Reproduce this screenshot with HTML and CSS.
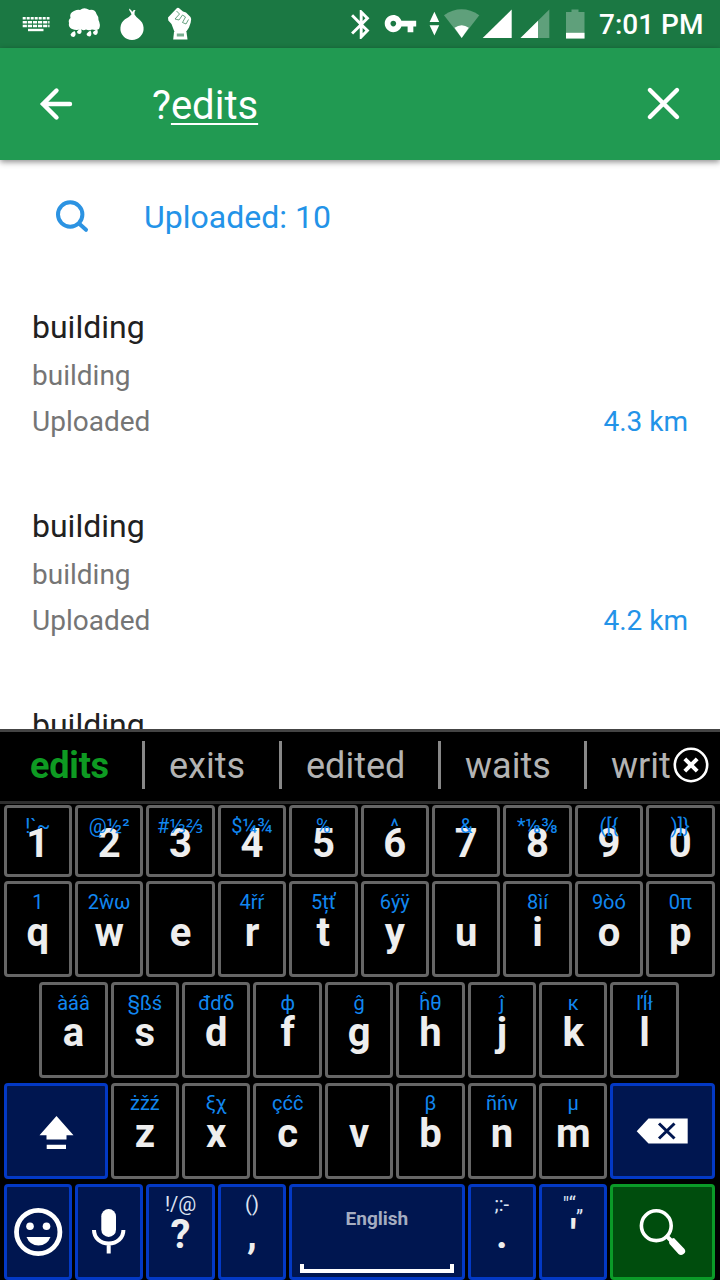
FILE: index.html
```html
<!DOCTYPE html>
<html lang="en">
<head>
<meta charset="utf-8">
<title>Search edits</title>
<link rel="stylesheet" href="styles.css">
</head>
<body>
<div class="screen">
  <div class="status">
    <div class="notices">
      <svg width="36" height="48" viewBox="18 0 36 48" fill="none" stroke="#fff"><path d="M22.700 18.300H49.500" stroke-width="2.600" stroke-dasharray="3 1"/><path d="M22.700 22.200H49.500M22.700 26H49.500" stroke-width="2.400" stroke-dasharray="4.200 .9"/><path d="M28 30H43.500" stroke-width="2.400"/></svg>
      <svg width="36" height="48" viewBox="66 0 36 48" fill="#fff"><path d="M72 29Q68 27 69 23Q68 20 70.500 18Q69 13 74 11Q78 9 80 10Q84 6.500 89.500 10Q95 9 96.500 14Q99 17 98.500 20Q101 25 99 29Q96 30.500 92 29.500Q89 31 86 29.500Q83 31 80.500 29Q77 31 72 29z"/><path d="M74.500 31q2.500 3.500-.5 6-3 0-3.500-2.500 1-2.500 4-3.500zM80.500 28q2.500 4-.5 6-3 0-3-2.500zM90.500 30.500q2 4-.5 6-3 0-3.500-2.500 1.500-2.500 4-3.500zM97 29q2 4-1 6-3 0-3-3z"/></svg>
      <svg width="36" height="48" viewBox="114 0 36 48" fill="#fff"><path d="M131.500 14.500C131 12 129 11 129 8.500Q131.500 9.500 132.300 12Q132.800 9.500 135.500 10Q134 12 134.500 14.500Q136 17 139 19.200A11.600 11.600 0 1 1 125 19.200Q129.500 17 131.500 14.500z"/></svg>
      <svg width="36" height="48" viewBox="162 0 36 48" fill="#fff"><path d="M168 17.500L176.500 8.500Q178 7 180 9L183 11.500L186 12.500L190.500 17Q192 19 190.700 22.500L189 27.500L186 32H174.500L171.500 24L168.300 20.500z"/><path d="M174 32h12.500l1 7.600h-14.300z"/><path d="M176.800 33.500h7.200v3h-7.200z" fill="#79ae90"/><path d="M176.500 11l3 3-4.500 5 4 1 3.500-5 3 2-3 5.500 3.500 1.500 2.500-4.500" fill="none" stroke="#287b4c" stroke-width=".7"/></svg>
    </div>
    <div class="indicators">
      <svg width="36" height="48" viewBox="344 0 36 48" fill="#fff"><path transform="translate(343.800 7) scale(1.450)" d="M17.710 7.710L12 2h-1v7.590L6.410 5 5 6.410 10.590 12 5 17.590 6.410 19 11 14.410V22h1l5.710-5.710-4.300-4.290 4.300-4.290zM13 5.830l1.880 1.880L13 9.590V5.830zm1.880 10.460L13 18.170v-3.760l1.880 1.880z"/></svg>
      <svg width="44" height="48" viewBox="380 0 44 48" fill="#fff"><path transform="translate(383.300 6.400) scale(1.430)" d="M12.650 10C11.830 7.670 9.610 6 7 6c-3.310 0-6 2.690-6 6s2.690 6 6 6c2.610 0 4.830-1.670 5.650-4H17v4h4v-4h2v-4H12.650zM7 14c-1.100 0-2-.9-2-2s.9-2 2-2 2 .9 2 2-.9 2-2 2z"/></svg>
      <svg width="56" height="48" viewBox="424 0 56 48" fill="#fff"><path d="M434.400 11.700l4.800 10.300h-9.600zM434.400 35.500l4.800-10.300h-9.600z"/><path d="M444 15.200Q461.500 3.500 479.300 15.200L461.700 38z" opacity=".3"/><path d="M454.500 27.800Q461.700 22.800 468.800 27.800L461.700 38z"/></svg>
      <svg width="34" height="48" viewBox="480 0 34 48" fill="#fff"><path d="M511.700 9.500V38H482.700z"/></svg>
      <svg width="46" height="48" viewBox="514 0 46 48" fill="#fff"><path d="M549.300 9.500V38H520.500z" opacity=".3"/><path d="M538 20.800V38H520.500z"/></svg>
      <svg width="39" height="48" viewBox="560 0 39 48" fill="#fff"><path d="M566 12h5.500v-2.500h7V12h6v26.500H566z" opacity=".3"/><path d="M566 32.800h18.500v5.700H566z"/></svg>
      <span class="clock">7:01 PM</span>
    </div>
  </div>

  <div class="searchbar">
    <svg width="40" height="40" viewBox="36 84 40 40" class="line"><path d="M56.500 90.500L43 104l13.500 13.500M43 104h27"/></svg>
    <div class="query">?<span class="typed">edits</span></div>
    <svg width="40" height="40" viewBox="643 84 40 40" class="line"><path d="M649.900 90L677 117M677 90L649.900 117"/></svg>
  </div>

  <div class="results">
    <div class="summary">
      <svg width="40" height="40" viewBox="52 196.500 40 40" class="lens"><circle cx="70.200" cy="214" r="12.200"/><path d="M79 223l7 6.300"/></svg>
      <span>Uploaded: 10</span>
    </div>
    <div class="item"><div class="name">building</div><div class="kind">building</div><div class="meta"><span>Uploaded</span><span class="distance">4.3 km</span></div></div>
    <div class="item"><div class="name">building</div><div class="kind">building</div><div class="meta"><span>Uploaded</span><span class="distance">4.2 km</span></div></div>
    <div class="item"><div class="name">building</div></div>
  </div>

  <div class="keyboard">
    <div class="suggestions">
      <span class="word first">edits</span><span class="word w-exits">exits</span><span class="word w-edited">edited</span><span class="word w-waits">waits</span><span class="word w-last">writ</span>
      <svg class="dismiss" width="38" height="38" viewBox="0 0 38 38"><circle cx="19" cy="19" r="16.200" fill="#000" stroke="#fff" stroke-width="2.600"/><path d="M12.800 12.800l12.400 12.400M25.200 12.800L12.800 25.200" stroke="#fff" stroke-width="4"/></svg>
    </div>
    <div class="row digits">
      <div class="key"><b>1</b><i>!`~</i></div><div class="key"><b>2</b><i>@½²</i></div><div class="key"><b>3</b><i>#⅓⅔</i></div><div class="key"><b>4</b><i>$¼¾</i></div><div class="key"><b>5</b><i>%</i></div><div class="key"><b>6</b><i>^</i></div><div class="key"><b>7</b><i>&amp;</i></div><div class="key"><b>8</b><i>*⅛⅜</i></div><div class="key"><b>9</b><i>([{</i></div><div class="key"><b>0</b><i>)]}</i></div>
    </div>
    <div class="row">
      <div class="key"><b>q</b><i>1</i></div><div class="key"><b>w</b><i>2ŵω</i></div><div class="key"><b>e</b></div><div class="key"><b>r</b><i>4řŕ</i></div><div class="key"><b>t</b><i>5țť</i></div><div class="key"><b>y</b><i>6ýÿ</i></div><div class="key"><b>u</b></div><div class="key"><b>i</b><i>8ìí</i></div><div class="key"><b>o</b><i>9òó</i></div><div class="key"><b>p</b><i>0π</i></div>
    </div>
    <div class="row home">
      <div class="key"><b>a</b><i>àáâ</i></div><div class="key"><b>s</b><i>§ßś</i></div><div class="key"><b>d</b><i>đďδ</i></div><div class="key"><b>f</b><i>ф</i></div><div class="key"><b>g</b><i>ĝ</i></div><div class="key"><b>h</b><i>ĥθ</i></div><div class="key"><b>j</b><i>ĵ</i></div><div class="key"><b>k</b><i>к</i></div><div class="key"><b>l</b><i>ľĺł</i></div>
    </div>
    <div class="row">
      <div class="key fn wide"><svg width="40" height="40" viewBox="35 1111 40 40" fill="#fff"><path d="M55.500 1116l17 19.300h-7v4.200h-20v-4.200h-7zM45.700 1144.700h19.300v4.200H45.700z"/></svg></div>
      <div class="key"><b>z</b><i>żžź</i></div><div class="key"><b>x</b><i>ξχ</i></div><div class="key"><b>c</b><i>çćĉ</i></div><div class="key"><b>v</b></div><div class="key"><b>b</b><i>β</i></div><div class="key"><b>n</b><i>ñńν</i></div><div class="key"><b>m</b><i>μ</i></div>
      <div class="key fn wide"><svg width="52" height="30" viewBox="636 1115.500 52 30"><path d="M636.700 1130.700L648.500 1118h39.200v25H648.500z" fill="#fff"/><path d="M659 1123l15.500 15M674.500 1123L659 1138" stroke="#001650" stroke-width="3" fill="none"/></svg></div>
    </div>
    <div class="row">
      <div class="key fn"><svg width="50" height="50" viewBox="12 1206 50 50"><circle cx="37.200" cy="1231" r="21.700" fill="none" stroke="#fff" stroke-width="4.800"/><circle cx="29" cy="1225.300" r="3.800" fill="#fff"/><circle cx="45.500" cy="1225.300" r="3.800" fill="#fff"/><path d="M25.500 1236h24q-3.500 8.600-12 8.600t-12-8.600z" fill="#fff"/></svg></div>
      <div class="key fn"><svg width="36" height="48" viewBox="91 1207 36 48"><rect x="101.300" y="1208" width="14.700" height="28" rx="7.350" fill="#fff"/><path d="M94 1229c0 8 6.500 13.500 14.700 13.500s14.700-5.500 14.700-13.500M108.700 1242v10.500" fill="none" stroke="#fff" stroke-width="4"/></svg></div>
      <div class="key fn"><b>?</b><i>!/@</i></div>
      <div class="key fn"><b>,</b><i>()</i></div>
      <div class="key fn space"><span class="lang">English</span><span class="bracket"></span></div>
      <div class="key fn"><b>.</b><i>;:-</i></div>
      <div class="key fn quote"><b>'</b><i>"“„</i></div>
      <div class="key go wide"><svg width="50" height="50" viewBox="637 1206 50 50"><circle cx="656.300" cy="1224.700" r="14.900" fill="none" stroke="#fff" stroke-width="3.600"/><path d="M666 1234.500l6 6" stroke="#fff" stroke-width="4"/><path d="M669 1241.500q1-4 5-4.500l10.500 11q2 3-1 5-2.500 2-5 0L669.500 1243z" fill="#fff"/></svg></div>
    </div>
  </div>
</div>
</body>
</html>
```
FILE: styles.css
```css
* { box-sizing: border-box; }
body { margin: 0; font-family: Roboto, "Noto Sans", sans-serif; background: #fff; }
svg { display: block; flex: none; }

.screen { width: 720px; height: 1280px; display: flex; flex-direction: column; overflow: hidden; }

.status { flex: none; height: 48px; background: #1b7843; color: #fff; display: flex; justify-content: space-between; padding-left: 18px; }
.notices { display: flex; gap: 12px; }
.indicators { display: flex; width: 376px; }
.clock { font-size: 28px; line-height: 50px; font-weight: 500; white-space: nowrap; }

.searchbar { flex: none; height: 112px; background: #219a52; display: flex; align-items: center; padding: 0 37px 0 36px; box-shadow: 0 2px 6px rgba(0,0,0,.45); position: relative; }
.line { fill: none; stroke: #fff; stroke-width: 4.4; stroke-linecap: round; }
.query { flex: 1; margin-left: 76px; padding-top: 3px; color: #fff; font-size: 40px; line-height: 48px; }
.typed { text-decoration: underline; text-decoration-thickness: 2px; text-underline-offset: 4px; text-decoration-skip-ink: none; }

.results { flex: none; height: 569px; overflow: hidden; background: #fff; }
.summary { height: 113px; display: flex; align-items: center; gap: 52px; padding-left: 52px; color: #2393e8; font-size: 32px; line-height: 40px; }
.lens { fill: none; stroke: #2c93e2; stroke-width: 4; stroke-linecap: round; }
.item { height: 199px; padding: 34px 32px 0; font-size: 28px; line-height: 46px; color: #757575; }
.name { font-size: 32px; line-height: 40px; color: #212121; margin-bottom: 6px; }
.meta { display: flex; justify-content: space-between; }
.distance { color: #2393e8; }

.keyboard { flex: 1; background: #000; border-top: 3px solid #444; }
.suggestions { height: 72px; border-bottom: 3px solid #2e2e2e; display: flex; align-items: flex-start; padding-top: 9px; position: relative; }
.word { height: 48px; line-height: 51px; font-size: 36px; color: #b3b3b3; padding-left: 24.5px; border-left: 3px solid #888; white-space: nowrap; }
.first { width: 141.5px; padding-left: 30px; border: 0; font-weight: 700; color: #0e9a22; letter-spacing: -.2px; }
.w-exits { width: 137px; }
.w-edited { width: 159px; }
.w-waits { width: 146px; }
.dismiss { position: absolute; left: 672px; top: 14px; }

.row { display: flex; gap: 3px; height: 96px; padding-left: 3.6px; margin-bottom: 4.8px; color: #eee; }
.digits { height: 72px; margin: 1px 0 4.300px; }
.home { padding-left: 39.3px; }
.key { flex: none; width: 68.4px; border: 3px solid #666; border-radius: 4px; display: grid; justify-items: center; align-items: start; }
.key b, .key i { grid-area: 1 / 1; white-space: nowrap; }
.key b { font-size: 40px; line-height: 40px; margin-top: 28.300px; }
.key i { font-style: normal; font-size: 20px; line-height: 24px; margin-top: 5.500px; color: #1187f0; }
.digits b { margin-top: 16.300px; }
.digits i { margin-top: 5.500px; }
.fn { background: #001650; border-color: #0339c5; }
.fn i { color: #dde3f2; }
.quote i { letter-spacing: .6px; }
.key svg { align-self: center; }
.wide { width: 104.1px; }
.go { background: #004d0d; border-color: #0b9a28; }
.space { width: 175.5px; grid-template-rows: 1fr auto; padding: 19.500px 8px 4px; }
.lang { font-size: 19px; line-height: 26px; font-weight: 700; color: #a5adc0; }
.bracket { justify-self: stretch; height: 9px; border: 4px solid #fff; border-top: 0; }
```
